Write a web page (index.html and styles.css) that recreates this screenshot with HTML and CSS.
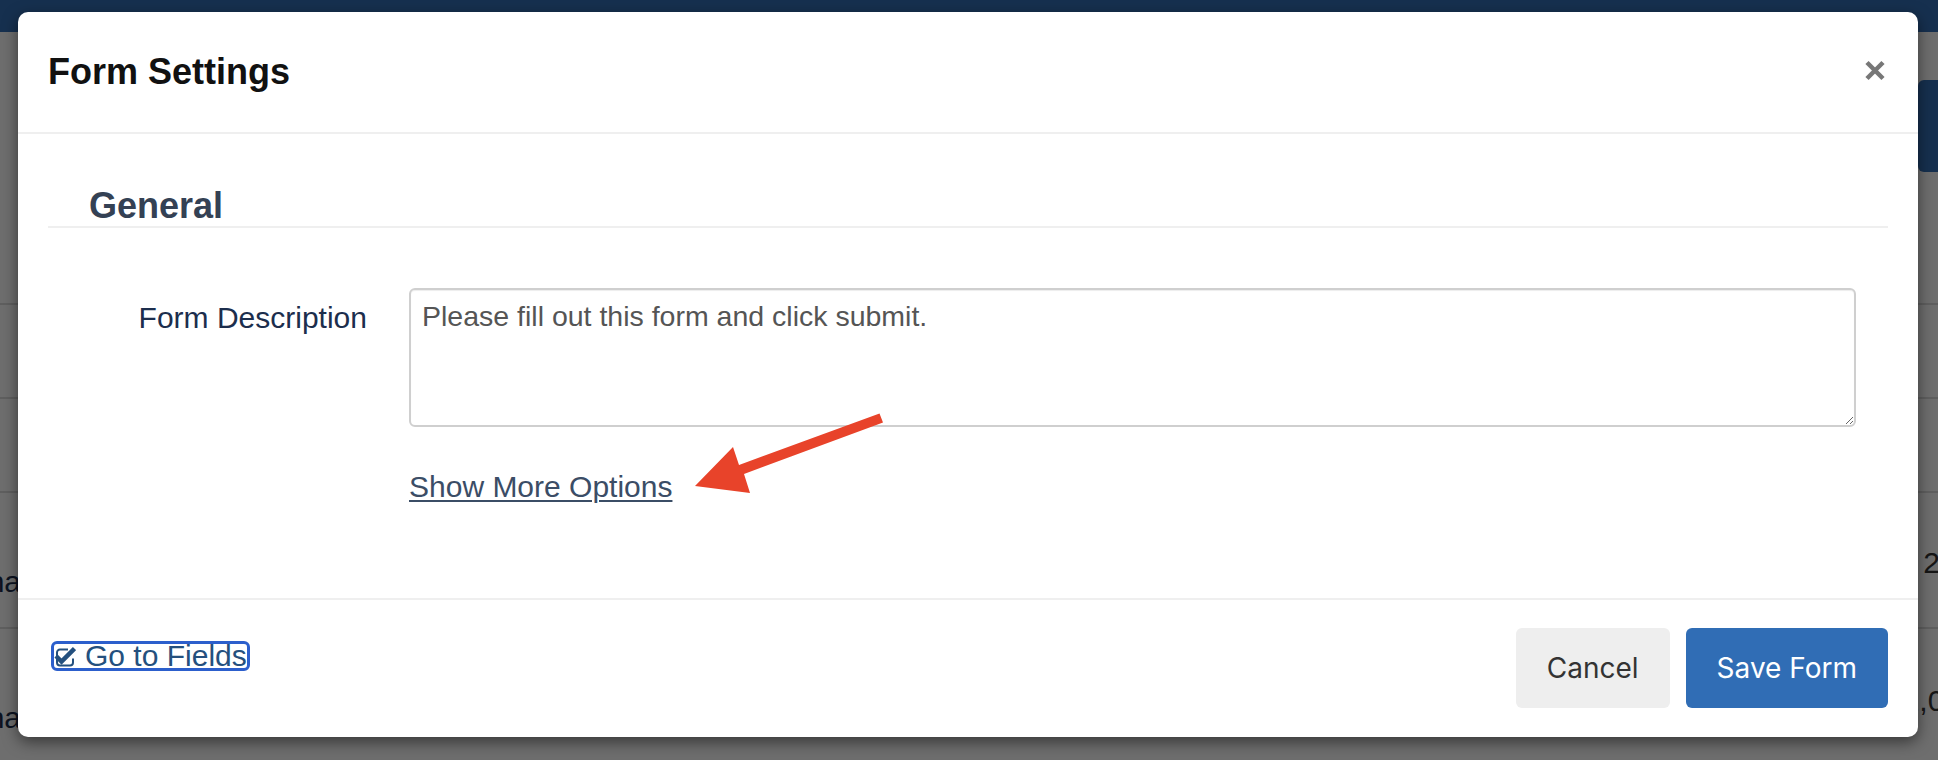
FILE: index.html
```html
<!DOCTYPE html>
<html lang="en">
<head>
    <meta charset="UTF-8">
    <meta name="viewport" content="width=device-width, initial-scale=1.0">
    <title>Form Settings</title>
    <link rel="stylesheet" href="styles.css">
</head>
<body>
    <!-- Page behind the modal -->
    <div class="page">
        <div class="topbar"></div>
        <div class="toolbar">
            <span class="toolbar-btn"></span>
        </div>
        <div class="table">
            <div class="table-row"></div>
            <div class="table-row"></div>
            <div class="table-row tall">
                <span class="cell-left">Jana</span>
                <span class="cell-right">2024</span>
            </div>
            <div class="table-row tall">
                <span class="cell-left">Jana</span>
                <span class="cell-right last">1,05</span>
            </div>
        </div>
    </div>

    <div class="backdrop"></div>

    <!-- Modal -->
    <div class="modal">
        <div class="modal-header">
            <h2 class="modal-title">Form Settings</h2>
            <button class="close-btn" type="button" aria-label="Close">
                <svg viewBox="0 0 22 22">
                    <path d="M3 3L19 19M19 3L3 19"/>
                </svg>
            </button>
        </div>

        <div class="modal-body">
            <h3 class="section-title">General</h3>

            <div class="form-row">
                <label class="form-label" for="description">Form Description</label>
                <div class="form-field">
                    <textarea id="description" class="form-textarea">Please fill out this form and click submit.</textarea>
                    <a href="#" class="more-link">Show More Options</a>
                </div>
            </div>
        </div>

        <div class="modal-footer">
            <a href="#" class="fields-link">
                <svg class="check-icon" viewBox="0 0 22 22">
                    <path class="box" d="M14 4.5H6a3 3 0 0 0-3 3v10a3 3 0 0 0 3 3h10a3 3 0 0 0 3-3v-4"/>
                    <path class="tick" d="M2 11l5.5 5.5L20.5 3.5"/>
                </svg>
                Go to Fields
            </a>
            <div class="footer-actions">
                <button class="btn btn-default" type="button">Cancel</button>
                <button class="btn btn-primary" type="button">Save Form</button>
            </div>
        </div>
    </div>

    <!-- annotation arrow -->
    <svg class="arrow" viewBox="690 408 200 90">
        <polygon points="879.5,413.5 883,422.5 744,474 750,493 695,486 733,447 739,465"/>
    </svg>
</body>
</html>
```

FILE: styles.css
```css
* {
    margin: 0;
    padding: 0;
    box-sizing: border-box;
}

body {
    width: 1938px;
    height: 760px;
    overflow: hidden;
    font-family: 'Liberation Sans', Arial, sans-serif;
    background: #fff;
    position: relative;
}

/* Page behind */
.page {
    height: 760px;
}

.topbar {
    height: 32px;
    background: #3370b8;
}

.toolbar {
    height: 273px;
    display: flex;
    justify-content: flex-end;
    padding-top: 48px;
    border-bottom: 2px solid #dcdcdc;
}

.toolbar-btn {
    width: 60px;
    height: 92px;
    margin-right: -40px;
    background: #3370b8;
    border-radius: 6px;
}

.table-row {
    height: 94px;
    border-bottom: 2px solid #dcdcdc;
    display: flex;
    justify-content: space-between;
    align-items: center;
    font-size: 30px;
    color: #1c2e4d;
}

.table-row.tall {
    height: 136px;
}

.cell-left {
    margin-left: -44px;
    padding-top: 44px;
}

.cell-right {
    margin-right: -52px;
    padding-top: 6px;
    color: #333;
}

.cell-right.last {
    margin-right: -23px;
    padding-top: 10px;
}

.backdrop {
    position: absolute;
    inset: 0;
    background: rgba(0,0,0,0.57);
}

/* Modal */
.modal {
    position: absolute;
    top: 12px;
    left: 18px;
    width: 1900px;
    height: 725px;
    background: #fff;
    border-radius: 10px;
    box-shadow: 0 5px 15px rgba(0,0,0,0.5);
    display: flex;
    flex-direction: column;
}

.modal-header {
    display: flex;
    justify-content: space-between;
    align-items: center;
    padding: 40px 32px 40px 30px;
    border-bottom: 2px solid #efefef;
}

.modal-title {
    font-size: 36px;
    line-height: 40px;
    font-weight: 700;
    color: #111;
}

.close-btn {
    background: none;
    border: none;
    width: 22px;
    height: 23px;
    margin-top: -3px;
    cursor: pointer;
}

.close-btn svg {
    width: 22px;
    height: 23px;
    stroke: #777;
    stroke-width: 4.5;
    fill: none;
}

.modal-body {
    flex: 1;
    padding: 52px 30px 0;
}

.section-title {
    font-size: 36px;
    line-height: 40px;
    font-weight: 700;
    color: #344154;
    padding-left: 41px;
    border-bottom: 2px solid #efefef;
}

.form-row {
    display: grid;
    grid-template-columns: 319px 1fr;
    column-gap: 42px;
    margin-top: 60px;
    padding-right: 32px;
}

.form-label {
    text-align: right;
    font-size: 30px;
    line-height: 34px;
    padding-top: 13px;
    color: #1c2e4d;
}

.form-field {
    display: flex;
    flex-direction: column;
    align-items: flex-start;
}

.form-textarea {
    width: 100%;
    height: 139px;
    border: 2px solid #cfcfcf;
    border-radius: 6px;
    box-shadow: inset 0 1px 1px rgba(0,0,0,0.075);
    padding: 9px 11px;
    font-family: 'Liberation Sans', Arial, sans-serif;
    font-size: 28.5px;
    line-height: 1.2;
    color: #555;
    resize: vertical;
    outline: none;
}

.more-link {
    margin-top: 43px;
    font-size: 30px;
    line-height: 34px;
    color: #3b4d66;
    text-decoration: underline;
    text-decoration-thickness: 2px;
    text-underline-offset: 3px;
}

.modal-footer {
    display: flex;
    justify-content: space-between;
    align-items: flex-start;
    padding: 28px 30px 29px 36px;
    border-top: 2px solid #efefef;
}

.fields-link {
    display: flex;
    align-items: center;
    gap: 9px;
    margin-top: 16px;
    font-size: 30px;
    line-height: 24px;
    color: #24507e;
    text-decoration: none;
    outline: 3px solid #2c5fcc;
    border-radius: 3px;
}

.check-icon {
    width: 22px;
    height: 22px;
    fill: none;
    stroke: #24507e;
}

.check-icon .box {
    stroke-width: 2;
}

.check-icon .tick {
    stroke-width: 4.5;
}

.footer-actions {
    display: flex;
    gap: 16px;
}

.btn {
    height: 80px;
    padding: 0 31px;
    border: none;
    border-radius: 6px;
    font-family: Inter, 'Liberation Sans', sans-serif;
    font-size: 28px;
    cursor: pointer;
}

.btn-default {
    background: #eeeeee;
    color: #333;
}

.btn-primary {
    background: #306db5;
    color: #fff;
}

/* Annotation */
.arrow {
    position: absolute;
    left: 690px;
    top: 408px;
    width: 200px;
    height: 90px;
    fill: #e8432a;
    pointer-events: none;
}
```
